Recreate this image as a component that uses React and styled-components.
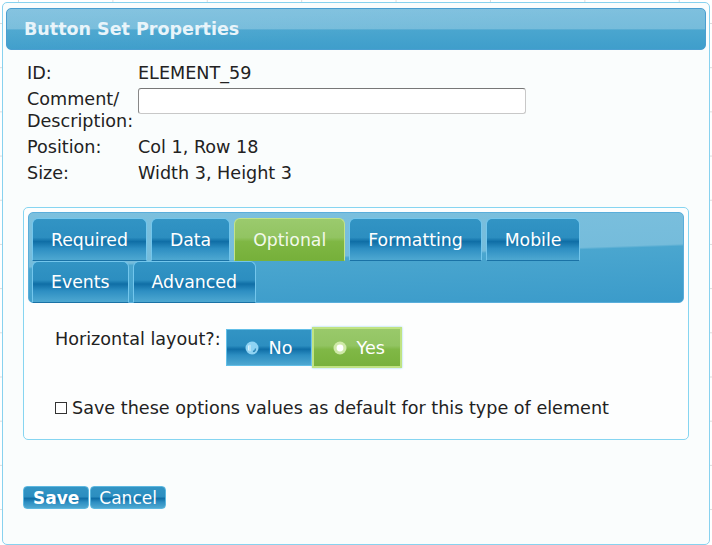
import React from "react";
import styled, { createGlobalStyle } from "styled-components";

const GlobalStyle = createGlobalStyle`
  html, body {
    margin: 0;
    padding: 0;
  }
  body {
    width: 712px;
    height: 545px;
    overflow: hidden;
    font-family: "DejaVu Sans", Verdana, sans-serif;
    color: #222;
    background-color: #fff;
    background-image:
      linear-gradient(to right, #dcdcdc 1px, transparent 1px),
      linear-gradient(to bottom, #dcdcdc 1px, transparent 1px);
    background-size: 94.4px 100%, 100% 44.2px;
    background-position: 18px 0, 0 23px;
  }
`;

const Dialog = styled.div`
  box-sizing: border-box;
  margin: 2px 0 0 2px;
  width: 708px;
  height: 543px;
  border: 1px solid #88d2ef;
  border-radius: 5px;
  background: #fafdfd;
  padding: 5px 3px 0 3px;
`;

const TitleBar = styled.div`
  box-sizing: border-box;
  height: 42px;
  border: 1px solid #4a9ed0;
  border-radius: 5px;
  padding-left: 17px;
  display: flex;
  align-items: center;
  background:
    linear-gradient(176deg, rgba(255, 255, 255, 0.06) 0%, rgba(255, 255, 255, 0) 60%),
    linear-gradient(to bottom, #7ec0de 0%, #76bcdb 50%, #4aa6cf 52%, #3f9ecb 100%);
  color: #e8f4fa;
  font-weight: bold;
  font-size: 17.5px;
`;

const InfoGrid = styled.div`
  display: grid;
  grid-template-columns: 111px 1fr;
  row-gap: 4px;
  padding: 12px 0 0 21px;
  font-size: 17.6px;
  line-height: 22px;
`;

const Label = styled.div``;

const Value = styled.div``;

const TextInput = styled.input`
  box-sizing: border-box;
  width: 388px;
  height: 26px;
  border: 1px solid #c8c8c8;
  border-top-color: #777;
  border-left-color: #888;
  border-radius: 3px;
  background: #fff;
  outline: none;
`;

const TabBox = styled.div`
  box-sizing: border-box;
  margin: 23px 0 0 17px;
  width: 666px;
  height: 233px;
  border: 1px solid #86d5f1;
  border-radius: 5px;
  background: #fdfefe;
  padding: 4px;
`;

const TabHeader = styled.div`
  box-sizing: border-box;
  height: 91px;
  border-radius: 5px;
  border: 1px solid #5aaedb;
  padding: 5px 0 0 3px;
  background: linear-gradient(
    178deg,
    #7cc0de 0%,
    #75bcdb 48%,
    #4aa6cf 50%,
    #3b9bca 100%
  );
`;

const TabRow = styled.div`
  display: flex;
  gap: 4px;
  height: ${(p) => p.$h}px;
`;

const Tab = styled.div`
  box-sizing: border-box;
  height: 100%;
  padding: 0 18px;
  display: flex;
  align-items: center;
  font-size: 17.3px;
  border: 1px solid ${(p) => (p.$active ? "#c3e28a" : "#73c6ec")};
  border-bottom-color: ${(p) => (p.$active ? "#79b13c" : "#1a72a6")};
  border-radius: 6px 6px 0 0;
  color: ${(p) => (p.$active ? "#f2f9ea" : "#fff")};
  background: ${(p) =>
    p.$active
      ? "linear-gradient(to bottom, #9bca6d 0%, #92c462 45%, #7fb744 55%, #76b03a 100%)"
      : "linear-gradient(to bottom, #3294c4 0%, #2c8ec0 45%, #0f6ea6 55%, #2d8ec2 72%, #4ea8d1 100%)"};
`;

const Content = styled.div`
  padding: 24px 0 0 27px;
  font-size: 17.6px;
  line-height: 22px;
`;

const LayoutRow = styled.div`
  display: flex;
  align-items: flex-start;
`;

const LayoutLabel = styled.div`
  padding-top: 1px;
  margin-right: 5px;
`;

const Toggle = styled.div`
  display: flex;
  align-items: center;
`;

const ToggleButton = styled.div`
  box-sizing: border-box;
  display: flex;
  align-items: center;
  gap: 10px;
  color: #fff;
  font-size: 17.6px;
  height: ${(p) => (p.$on ? 41 : 37)}px;
  padding: ${(p) => (p.$on ? "0 15px 0 19px" : "0 18px 0 18px")};
  border: ${(p) => (p.$on ? "2px solid #c0e383" : "1px solid #62bfe8")};
  box-shadow: ${(p) => (p.$on ? "0 0 2px #8fd0f2" : "none")};
  background: ${(p) =>
    p.$on
      ? "linear-gradient(to bottom, #99c96a 0%, #92c462 45%, #80b846 55%, #78b13c 100%)"
      : "linear-gradient(to bottom, #3294c4 0%, #2c8ec0 45%, #0f6ea6 55%, #2d8ec2 72%, #4ea8d1 100%)"};
`;

const SaveDefault = styled.div`
  display: flex;
  align-items: center;
  margin-top: 29px;
`;

const Box = styled.span`
  box-sizing: border-box;
  display: inline-block;
  width: 12px;
  height: 12px;
  border: 1px solid #333;
  margin-right: 5px;
  background: #fff;
`;

const Actions = styled.div`
  display: flex;
  gap: 1px;
  margin: 46px 0 0 17px;
`;

const ActionButton = styled.div`
  box-sizing: border-box;
  height: 23px;
  padding: 0 ${(p) => (p.$primary ? 9 : 8)}px;
  display: flex;
  align-items: center;
  color: #fff;
  font-size: 17px;
  font-weight: ${(p) => (p.$primary ? "bold" : "normal")};
  border: 1px solid #5db8e0;
  border-radius: 4px;
  background: linear-gradient(
    to bottom,
    #3294c4 0%,
    #2c8ec0 45%,
    #0f6ea6 55%,
    #2d8ec2 72%,
    #4ea8d1 100%
  );
`;

const RadioOff = () => (
  <svg width="14" height="14" viewBox="0 0 14 14">
    <circle cx="7" cy="7" r="6.5" fill="#8fd3f3" />
    <path d="M3.5 4.5v5M5 3.8v6.4" stroke="#d8f1fc" strokeWidth="1" />
    <path d="M10.5 7.5c0 1.8-1.2 3-2.6 3" stroke="#2a86b8" strokeWidth="1.3" fill="none" />
  </svg>
);

const RadioOn = () => (
  <svg width="14" height="14" viewBox="0 0 14 14">
    <circle cx="7" cy="7" r="6.5" fill="#cfe9a8" />
    <circle cx="7" cy="7" r="3.4" fill="#fff" />
  </svg>
);

export default function App() {
  return (
    <>
      <GlobalStyle />
      <Dialog>
        <TitleBar>Button Set Properties</TitleBar>
        <InfoGrid>
          <Label>ID:</Label>
          <Value>ELEMENT_59</Value>
          <Label>
            Comment/
            <br />
            Description:
          </Label>
          <Value>
            <TextInput type="text" />
          </Value>
          <Label>Position:</Label>
          <Value>Col 1, Row 18</Value>
          <Label>Size:</Label>
          <Value>Width 3, Height 3</Value>
        </InfoGrid>
        <TabBox>
          <TabHeader>
            <TabRow $h={43}>
              <Tab>Required</Tab>
              <Tab>Data</Tab>
              <Tab $active>Optional</Tab>
              <Tab>Formatting</Tab>
              <Tab>Mobile</Tab>
            </TabRow>
            <TabRow $h={42}>
              <Tab>Events</Tab>
              <Tab>Advanced</Tab>
            </TabRow>
          </TabHeader>
          <Content>
            <LayoutRow>
              <LayoutLabel>Horizontal layout?:</LayoutLabel>
              <Toggle>
                <ToggleButton>
                  <RadioOff />
                  No
                </ToggleButton>
                <ToggleButton $on>
                  <RadioOn />
                  Yes
                </ToggleButton>
              </Toggle>
            </LayoutRow>
            <SaveDefault>
              <Box />
              Save these options values as default for this type of element
            </SaveDefault>
          </Content>
        </TabBox>
        <Actions>
          <ActionButton $primary>Save</ActionButton>
          <ActionButton>Cancel</ActionButton>
        </Actions>
      </Dialog>
    </>
  );
}
